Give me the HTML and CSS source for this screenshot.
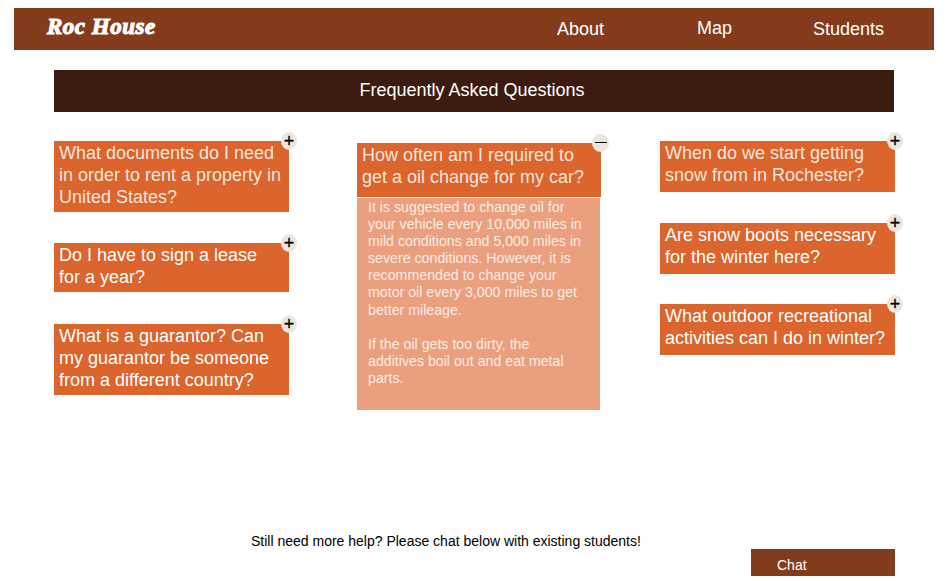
FILE: index.html
```html
<!DOCTYPE html>
<html lang="en">
<head>
  <meta charset="UTF-8">
  <title>Roc House FAQ</title>
  <link rel="stylesheet" href="styles.css">
</head>
<body>

<div class="header">
  <div class="logo">Roc House</div>
  <div class="nav">
    <a class="nav-about">About</a>
    <a class="nav-map">Map</a>
    <a class="nav-students">Students</a>
  </div>
</div>

<h1 class="title">Frequently Asked Questions</h1>

<div class="faq">
  <div class="col col-left">
    <div class="question soft">What documents do I need in order to rent a property in United States?<span class="toggle">+</span></div>
    <div class="question">Do I have to sign a lease for a year?<span class="toggle">+</span></div>
    <div class="question nudge">What is a guarantor? Can my guarantor be someone from a different country?<span class="toggle">+</span></div>
  </div>

  <div class="col col-mid">
    <div class="question soft">How often am I required to get a oil change for my car?<span class="toggle minus"></span></div>
    <div class="answer">
      <p>It is suggested to change oil for your vehicle every 10,000 miles in mild conditions and 5,000 miles in severe conditions. However, it is recommended to change your motor oil every 3,000 miles to get better mileage.</p>
      <p>If the oil gets too dirty, the additives boil out and eat metal parts.</p>
    </div>
  </div>

  <div class="col col-right">
    <div class="question soft">When do we start getting snow from in Rochester?<span class="toggle">+</span></div>
    <div class="question">Are snow boots necessary for the winter here?<span class="toggle">+</span></div>
    <div class="question pull">What outdoor recreational activities can I do in winter?<span class="toggle">+</span></div>
  </div>
</div>

<p class="help">Still need more help? Please chat below with existing students!</p>

<div class="chat-row">
  <div class="chat">Chat</div>
</div>

</body>
</html>
```

FILE: styles.css
```css
body {
  margin: 0;
  padding-top: 8px;
  background-color: #fff;
  color: #000;
  font-family: "Liberation Sans", Arial, sans-serif;
}

.header {
  display: flex;
  justify-content: space-between;
  align-items: center;
  height: 42px;
  margin: 0 13px 0 14px;
  background-color: #843b1c;
  color: #fff;
}

.logo {
  margin-left: 33px;
  padding-bottom: 4px;
  font-family: "Liberation Serif", serif;
  font-size: 23px;
  font-style: italic;
  font-weight: bold;
  letter-spacing: 0.5px;
  -webkit-text-stroke: 1.1px #fff;
}

.nav {
  display: flex;
  font-size: 18px;
}

.nav-about {
  margin-right: 93px;
  padding-top: 1px;
}

.nav-map {
  margin-right: 81px;
}

.nav-students {
  margin-right: 50px;
  padding-top: 1px;
}

.title {
  height: 42px;
  margin: 20px 53px 0 54px;
  padding-right: 4px;
  background-color: #3c1c10;
  color: #fff;
  font-size: 18px;
  font-weight: normal;
  line-height: 41px;
  text-align: center;
}

.faq {
  display: flex;
  align-items: flex-start;
  height: 392px;
  margin: 29px 0 0 54px;
}

.col {
  display: flex;
  flex-direction: column;
  gap: 31px;
  width: 235px;
}

.col-mid {
  gap: 1px;
  width: 244px;
  margin: 2px 59px 0 68px;
}

.question {
  position: relative;
  padding: 1px 7px 4px 5px;
  background-color: #dc642d;
  color: #fff;
  font-size: 18px;
  line-height: 22px;
}

.col-mid .question {
  padding-bottom: 9px;
}

.col-right .question {
  padding-bottom: 6px;
}

.nudge {
  margin-top: 1px;
}

.pull {
  margin-top: -1px;
}

.soft {
  color: #f3e6dd;
}

.toggle {
  position: absolute;
  top: -9px;
  right: -8px;
  width: 16px;
  height: 18px;
  border-radius: 50%;
  background-color: #ebe6e0;
  color: #000;
  font-size: 18px;
  line-height: 19px;
  text-align: center;
  -webkit-text-stroke: 0.3px #000;
}

.minus {
  width: 17px;
}

.minus::after {
  content: "";
  display: block;
  width: 12px;
  height: 1px;
  margin: 8px auto 0 auto;
  background-color: #000;
}

.answer {
  width: 243px;
  height: 212px;
  box-sizing: border-box;
  padding: 1px 14px 0 11px;
  background-color: #eaa07f;
  color: #f8ebe4;
  font-size: 14.2px;
  line-height: 17.1px;
}

.answer p {
  margin: 0 0 17px 0;
}

.help {
  margin: 0;
  padding-left: 251px;
  font-size: 14px;
  line-height: 16px;
}

.chat-row {
  display: flex;
  justify-content: flex-end;
  margin: 0 52px 0 0;
}

.chat {
  width: 144px;
  height: 27px;
  box-sizing: border-box;
  padding: 8px 0 0 26px;
  background-color: #843b1c;
  color: #fff;
  font-size: 14px;
  line-height: 17px;
}
```
